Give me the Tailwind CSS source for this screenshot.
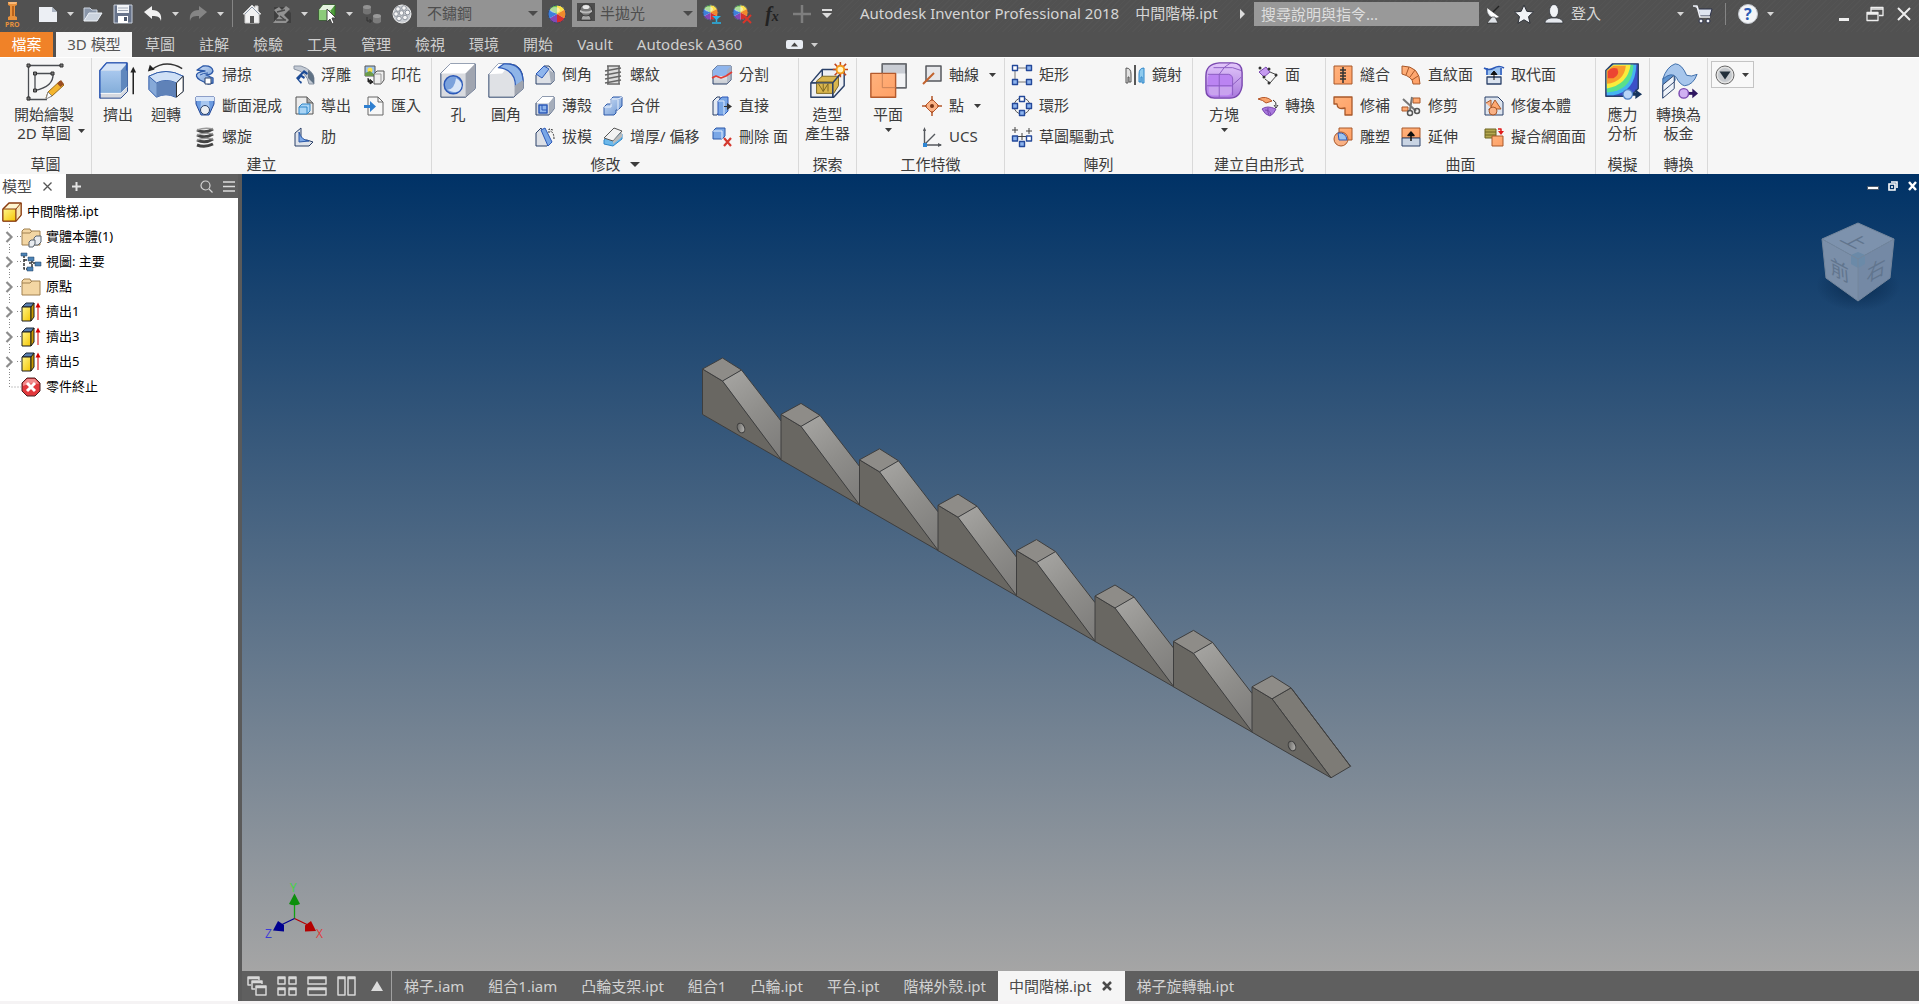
<!DOCTYPE html>
<html lang="zh-Hant">
<head>
<meta charset="utf-8">
<title>Autodesk Inventor Professional 2018 - 中間階梯.ipt</title>
<script src="https://cdn.jsdelivr.net/npm/@tailwindcss/browser@4"></script>
</head>
<body class="h-screen flex flex-col overflow-hidden bg-[#f5f5f5] font-['Noto_Sans','Noto_Sans_CJK_TC',sans-serif] text-[15px] leading-[19px] text-[#3c3c3c]">

<svg class="absolute size-0" aria-hidden="true">
  <defs>
    <linearGradient id="gBlue" x1="0" y1="0" x2="1" y2="1"><stop offset="0" stop-color="#cfe0f7"/><stop offset="1" stop-color="#6d97d3"/></linearGradient>
    <linearGradient id="gBox" x1="0" y1="0" x2="0" y2="1"><stop offset="0" stop-color="#a9c8ee"/><stop offset="1" stop-color="#83add9"/></linearGradient>
    <linearGradient id="gGrey" x1="0" y1="0" x2="0" y2="1"><stop offset="0" stop-color="#ffffff"/><stop offset="1" stop-color="#c8ccd3"/></linearGradient>
    <linearGradient id="gOrange" x1="0" y1="0" x2="1" y2="1"><stop offset="0" stop-color="#ffb27c"/><stop offset="1" stop-color="#ffa066"/></linearGradient>
    <linearGradient id="gPurple" x1="0" y1="0" x2="0" y2="1"><stop offset="0" stop-color="#e3c8fb"/><stop offset="1" stop-color="#a878dc"/></linearGradient>
    <linearGradient id="gYellow" x1="0" y1="0" x2="1" y2="1"><stop offset="0" stop-color="#fff68a"/><stop offset="1" stop-color="#f5c400"/></linearGradient>
    <linearGradient id="gHole" x1="0" y1="0" x2="1" y2="1"><stop offset="0" stop-color="#5c5b58"/><stop offset="1" stop-color="#c4c3c0"/></linearGradient>
    <linearGradient id="gSlope" gradientUnits="userSpaceOnUse" x1="25" y1="10" x2="78" y2="80"><stop offset="0" stop-color="#a3a29f"/><stop offset=".5" stop-color="#8f8e8b"/><stop offset="1" stop-color="#7f7e7c"/></linearGradient>
    <radialGradient id="gShade"><stop offset="0" stop-color="#001c3c" stop-opacity=".6"/><stop offset="1" stop-color="#001c3c" stop-opacity="0"/></radialGradient>
    <symbol id="down" viewBox="0 0 7 4"><path d="M0 0H7L3.5 4Z" fill="currentColor"/></symbol>
    <symbol id="ball" viewBox="0 0 20 20"><circle cx="10" cy="10" r="9" fill="#f4f4f4"/><path d="M10 10V1a9 9 0 0 1 7.800 4.500Z" fill="#fbe14a"/><path d="M10 10 17.800 5.500a9 9 0 0 1 0 9Z" fill="#f08a2c"/><path d="M10 10 17.800 14.500A9 9 0 0 1 10 19Z" fill="#d62f2f"/><path d="M10 10V19a9 9 0 0 1-7.800-4.500Z" fill="#8448b8"/><path d="M10 10 2.200 14.500a9 9 0 0 1 0-9Z" fill="#3d7fdc"/><path d="M10 10 2.200 5.500A9 9 0 0 1 10 1Z" fill="#6cc24a"/><circle cx="10" cy="10" r="9" fill="none" stroke="#3b4660"/><ellipse cx="8" cy="6" rx="5" ry="3" fill="#fff" opacity=".45"/></symbol>
    <symbol id="extrude" viewBox="0 0 20 20"><path d="M1 5 5 1h8l-2 4Z" fill="#5a7fae" stroke="#1d2a3a"/><path d="M1 5h9v14H1Z" fill="url(#gYellow)" stroke="#1d1d1d"/><path d="M10 5l3-4v14L10 19Z" fill="#c99a00" stroke="#1d1d1d"/><path d="M17 18V3" stroke="#d40000"/><path d="M14.500 5.500 17 .5l2.500 5Z" fill="#d40000"/></symbol>
  </defs>
</svg>

<header class="shrink-0 bg-[#515151] text-[#d6d6d6]">
  <div class="flex h-8 items-start bg-[repeating-linear-gradient(135deg,#515151_0px,#515151_3px,#545454_3px,#545454_4px)]">
    <div class="flex h-[27px] shrink-0 items-center bg-[#515151]" id="quick"></div>
    <h1 class="flex h-[27px] min-w-0 flex-1 items-center gap-4 overflow-hidden pl-[23px] whitespace-nowrap text-[15px]"><span>Autodesk Inventor Professional 2018</span><span>中間階梯.ipt</span></h1>
    <div class="flex h-[27px] shrink-0 items-center" id="account"></div>
  </div>
  <nav class="flex h-[25px] items-center text-[#cfcfcf]" id="tabs"></nav>
</header>

<section class="flex h-[117px] shrink-0 overflow-hidden border-t border-[#fff] bg-[#f6f6f6]" id="ribbon" aria-label="功能區"></section>

<main class="flex min-h-0 flex-1">
  <aside class="flex w-[238px] shrink-0 flex-col bg-white">
    <div class="flex h-6 shrink-0 items-center bg-[#5f5f5f] text-[#dcdcdc]">
      <button class="flex h-full w-[66px] items-center gap-[11px] bg-white pl-[2px] text-[#4a4a4a]">模型
        <svg class="size-[9px]" viewBox="0 0 9 9"><path d="M.5.5l8 8M8.500.5l-8 8" stroke="#555" stroke-width="1.300"/></svg></button>
      <button class="flex h-full w-5 items-center justify-center" aria-label="新增"><svg class="size-[9px]" viewBox="0 0 9 9"><path d="M4.500 0v9M0 4.500h9" stroke="#e4e4e4" stroke-width="2"/></svg></button>
      <button class="ml-auto flex h-full w-7 items-center justify-center" aria-label="搜尋"><svg class="size-[13px]" viewBox="0 0 13 13"><circle cx="5.500" cy="5.500" r="4.500" fill="none" stroke="#d4d4d4" stroke-width="1.200"/><path d="M9 9l3.500 3.500" stroke="#d4d4d4" stroke-width="1.300"/></svg></button>
      <button class="flex h-full w-[18px] items-center justify-center" aria-label="功能表"><svg class="h-[11px] w-3" viewBox="0 0 12 11"><path d="M0 1h12M0 5.500h12M0 10h12" stroke="#dcdcdc" stroke-width="1.300"/></svg></button>
    </div>
    <ul class="pt-px text-[13px] text-black" id="tree"></ul>
  </aside>
  <div class="w-1 shrink-0 bg-[#5a5a5a]"></div>
  <div class="flex min-w-0 flex-1 flex-col">
    <div class="relative min-h-0 flex-1 overflow-hidden bg-[linear-gradient(to_bottom,#003266,#a5a5a5)]">
      <svg class="absolute inset-0 size-full" viewBox="242 174 1677 797" id="scene">
        <g id="ladder"></g>
        <g stroke="#3d3d3d" stroke-width="1"><ellipse cx="741" cy="428" rx="3.500" ry="5" transform="rotate(-25 741 428)" fill="url(#gHole)"/><ellipse cx="1292" cy="746" rx="3.500" ry="5" transform="rotate(-25 1292 746)" fill="url(#gHole)"/></g>
        <g>
          <path d="M294.500 918.500V900" stroke="#12a012" stroke-width="1.300"/><path d="M289 904l5.500-10.500L300 904q-5.500 2.500-11 0Z" fill="#0c8f0c"/>
          <path d="M294.500 918.500 308 925" stroke="#b40000" stroke-width="1.200"/><path d="M305 931.500v-6l6-4.500 5 10Z" fill="#b40000"/>
          <path d="M294.500 918.500 281 925" stroke="#000090" stroke-width="1.200"/><path d="M273 930.500l5-9.500 6 4v6.500Z" fill="#000090"/>
          <text x="290" y="892" font-size="12" font-family="Open Sans" fill="#3fd63f">Y</text><text x="316" y="938" font-size="12" font-family="Open Sans" fill="#e03a3a">X</text><text x="265" y="938" font-size="12" font-family="Open Sans" fill="#3a3ad6">Z</text>
        </g>
      </svg>
      <svg class="absolute top-[42px] right-[16px] h-[96px] w-[90px]" viewBox="1813 216 90 96" aria-label="ViewCube">
        <ellipse cx="1858" cy="286" rx="42" ry="25" fill="url(#gShade)"/>
        <path d="M1858 223l36 16-36 20-36-20Z" fill="#7d92ad"/><path d="M1822 239l36 20v42l-32-23Z" fill="#7b8fa9"/><path d="M1894 239l-36 20v42l32-23Z" fill="#7489a5"/>
        <path d="M1851 255l7-3 7 3v9l-7 4-7-4Z" fill="#6b8aa8"/>
        <path d="M1858 223l36 16-4 39-32 23-32-23-4-39ZM1822 239l36 20 36-20M1858 259v42" fill="none" stroke="#74869c"/>
        <g font-family="Noto Sans CJK TC" font-size="21" fill="#61758e"><text transform="matrix(.87 .44 -.87 .46 1839 240)">上</text><text transform="matrix(.9 .48 .08 1 1831 273)">前</text><text transform="matrix(.9 -.48 -.08 1 1866 283)">右</text></g>
      </svg>
      <div class="absolute top-[7px] right-px flex h-[10px] items-center gap-[9px] text-white">
        <button aria-label="最小化"><svg class="h-[10px] w-3" viewBox="0 0 12 10"><path d="M0 5h12v4H0Z" fill="#4a5a6c"/><path d="M1 6h10v2H1Z" fill="#fff"/></svg></button>
        <button aria-label="還原"><svg class="size-[10px]" viewBox="0 0 10 10"><path d="M3 1h6v6M1 3h6v6H1ZM4 5v2" fill="none" stroke="#fff" stroke-width="1.600"/></svg></button>
        <button aria-label="關閉"><svg class="h-[10px] w-[11px]" viewBox="0 0 11 10"><path d="M2 1l7 8M9 1l-7 8" stroke="#fff" stroke-width="2.400"/></svg></button>
      </div>
    </div>
    <footer class="flex h-[30px] shrink-0 items-center bg-[#5f5f5f] text-[#d2d2d2]" id="docs"></footer>
  </div>
</main>
<div class="h-[3px] shrink-0 bg-[#f5f3f4]"></div>

<script>
const svg20 = (s, c = 'size-5 shrink-0 overflow-visible') => `<svg class="${c}" viewBox="0 0 20 20" fill="none" stroke-linejoin="round">${s}</svg>`;
const down = '<svg class="h-1 w-[7px] shrink-0"><use href="#down"/></svg>';
const N = 'stroke="#2a4068"', O = 'stroke="#a8582a"';

/* quick access bar */
const slot = (s, label, w) => `<button class="flex h-full ${w || 'w-[30px]'} shrink-0 items-center justify-center" aria-label="${label}">${svg20(s)}</button>`;
const dd = '<button class="flex h-full w-[15px] shrink-0 items-center justify-center" aria-label="更多">' + down + '</button>';
const caret = '<svg class="pointer-events-none absolute top-[11px] right-[4px] h-[5px] w-[10px]" viewBox="0 0 10 5"><path d="M0 0h10L5 5Z" fill="#4a4a4a"/></svg>';
document.getElementById('quick').innerHTML =
  `<button class="flex h-full w-[33px] shrink-0 items-start pl-[5px]" aria-label="Inventor"><svg class="h-7 w-[15px] overflow-visible" viewBox="0 0 15 28"><path d="M3 2h9v3l-2 1v10l2 1v3H3v-3l2-1V6L3 5Z" fill="#e8913c"/><path d="M7 6h2v10H7Z" fill="#b8621c"/><path d="M3 2h9l-1 2H4Z" fill="#f7b878"/><text x="0" y="27" font-size="7" font-weight="700" font-family="Open Sans" fill="#e8913c">PRO</text></svg></button>`
+ slot('<path d="M1 3h13l5 5v10H1Z" fill="#eceff4"/><path d="M14 3v5h5Z" fill="#aab3c2"/>', '新建') + dd
+ slot('<path d="M1 17V4h6l2 2h5v3" fill="#8995a8" stroke="#cdd5e0"/><path d="M1 17 6 9h13l-5 8Z" fill="#cbd3de" stroke="#eef2f7"/>', '開啟')
+ slot('<path d="M1 1h18v18H1Z" fill="#67738a" stroke="#c7cfdb"/><path d="M4 1h12v8H4Z" fill="#f2f4f7"/><path d="M5 12h10v7H5Z" fill="#fff"/><path d="M11 13h3v4h-3Z" fill="#4d586c"/><path d="M5 4h10M5 6.500h10" stroke="#a3abb8"/>', '儲存')
+ slot('<path d="M1 8 9 2v4c7 0 10 4 9 11-1-4-3-5-9-5v3Z" fill="#f2f2f2"/>', '退回') + dd
+ slot('<path d="M19 8 11 2v4C4 6 1 10 2 17c1-4 3-5 9-5v3Z" fill="#858585"/>', '重做') + dd
+ '<span class="mx-1 h-[27px] w-px shrink-0 bg-[#858585]"></span>'
+ slot('<path d="M10 1 1 10h2v9h14v-9h2l-3-3V2h-3v2Z" fill="#f1f1f1" stroke="#d0d0d0"/><path d="M8 12h4v7H8Z" fill="#555"/><path d="M3 10l7-7 7 7" stroke="#8a97a8"/>', '首頁')
+ slot('<path d="M2 3h11l6 6v10H2Z" fill="#3f3f3f"/><path d="M2 6l5-3 3 3 4-4 4 3-6 6 5 5-3 3H1l6-7Z" fill="#929292"/><path d="M5 8 13 6M4 16h10M8 12l5 4" stroke="#4a4a4a" stroke-width="1.500"/>', '塗彩') + dd
+ slot('<path d="M2 6 6 1h12v10l-4 5H2Z" fill="#4f9d3c" stroke="#2f6f23"/><path d="M2 6h12v10H2Z" fill="#8ccb79"/><path d="M6 1h12l-4 5H2Z" fill="#e4f3de"/><path d="M10 5v13l3-3 2 5 2-1-2-5h4Z" fill="#fff" stroke="#444"/>', '選取') + dd
+ slot('<path d="M1 3v6q4 3 8 0V3" fill="#747474"/><ellipse cx="5" cy="3" rx="4" ry="2" fill="#929292"/><path d="M11 12v6q4 3 8 0v-6" fill="#7b7b7b"/><ellipse cx="15" cy="12" rx="4" ry="2" fill="#999"/><path d="M5 13v4h4M7.500 15l2 2-2 2" stroke="#333"/>', '更新')
+ slot('<circle cx="10" cy="10" r="9" fill="#c9cdd2" stroke="#eee"/><g fill="#f6f6f6" stroke="#7b828b" stroke-width=".8"><circle cx="6" cy="5" r="2.300"/><circle cx="12" cy="4" r="2.300"/><circle cx="4" cy="10" r="2.300"/><circle cx="9.500" cy="9" r="2.300"/><circle cx="15.500" cy="8.500" r="2.300"/><circle cx="7" cy="14.500" r="2.300"/><circle cx="13" cy="13.500" r="2.300"/></g>', '材質')
+ `<label class="relative block h-[27px] w-[125px] shrink-0 text-[#4e4e4e]"><span class="sr-only">材料</span><select class="block h-[27px] w-full appearance-none bg-[#939393] pl-[10px] text-[15px] leading-[27px]"><option>不鏽鋼</option></select>${caret}</label>`
+ slot('<use href="#ball"/>', '外觀')
+ `<label class="relative block h-[27px] w-[125px] shrink-0 text-[#4e4e4e]"><span class="sr-only">外觀樣式</span><select class="block h-[27px] w-full appearance-none bg-[#939393] pl-[28px] text-[15px] leading-[27px]"><option>半拋光</option></select><svg class="pointer-events-none absolute top-[3px] left-[5px] size-[18px]" viewBox="0 0 18 18"><path d="M0 0h18v18H0Z" fill="#4d4d4d"/><path d="M4 17q0-4 3-5h4q3 1 3 5Z" fill="#a6a6a6" stroke="#222" stroke-width=".6"/><circle cx="9" cy="7" r="6" fill="#777" stroke="#222" stroke-width=".6"/><path d="M3 7q6 3 12 0v2q-6 3-12 0Z" fill="#bbb"/><ellipse cx="9" cy="4" rx="3.500" ry="2" fill="#e8e8e8"/></svg>${caret}</label>`
+ slot('<svg width="17" height="17" viewBox="0 0 20 20"><use href="#ball"/></svg><path d="M10 12h9l-4.500 4Z" fill="#29b5ea"/><path d="M14.500 14v4M10 19h9" stroke="#29b5ea" stroke-width="1.500"/>', '調整')
+ slot('<svg width="17" height="17" viewBox="0 0 20 20"><use href="#ball"/></svg><path d="M11 11l8 8M19 11l-8 8" stroke="#d8352a" stroke-width="2"/>', '清除')
+ `<button class="flex h-full w-[30px] shrink-0 items-center justify-center font-['Liberation_Serif',serif] text-xl leading-5 font-bold text-[#222] italic" aria-label="參數">f<sub class="text-sm leading-none">x</sub></button>`
+ slot('<path d="M10 1v18M1 10h18" stroke="#7e7e7e" stroke-width="2.500"/>', '加入')
+ slot('<path d="M5 5h10v2H5ZM5 9h10l-5 5Z" fill="#dcdcdc"/>', '自訂', 'w-5');

document.getElementById('account').innerHTML =
  `<svg class="mr-[9px] h-[10px] w-[5px]" viewBox="0 0 5 10"><path d="M0 0 5 5 0 10Z" fill="#ddd"/></svg>
  <input class="h-6 w-[225px] bg-[#999] pl-[7px] text-[15px] placeholder:text-[#dedede] placeholder:opacity-100" type="search" aria-label="搜尋說明與指令" placeholder="搜尋說明與指令...">`
+ slot('<path d="M3 5q0 9 10 9Z" fill="#dfe3e8"/><path d="M3 4 15 13Q6 16 3 4Z" fill="#fff"/><path d="M9 8l6-6" stroke="#222" stroke-width="1.500"/><path d="M8 13h3l3 6H3Z" fill="#dfe3e8" stroke="#222" stroke-width=".6"/>', '通訊')
+ slot('<path d="M10 1l2.800 6.300 6.700.7-5 4.600 1.500 6.700L10 15.800 4 19.300l1.500-6.700-5-4.600 6.700-.7Z" fill="#f1f3f6" stroke="#2d3138"/>', '我的最愛')
+ slot('<ellipse cx="10" cy="7" rx="4.500" ry="6.500" fill="#f1f3f6" stroke="#2d3138" stroke-width=".7"/><path d="M1 19q0-4 6-5h6q6 1 6 5Z" fill="#e6e9ee" stroke="#2d3138" stroke-width=".7"/>', '使用者')
+ `<button class="w-[104px] pl-[2px] text-left">登入</button>` + dd
+ slot('<path d="M0 2h4l3 10h10l2-7H6" fill="#dfe5f0" stroke="#2b3048"/><path d="M0 2h4l3 11h10" stroke="#f1f3f8" stroke-width="1.600"/><circle cx="8" cy="17" r="2" fill="#f1f3f8" stroke="#2b3048"/><circle cx="15" cy="17" r="2" fill="#f1f3f8" stroke="#2b3048"/>', '購物')
+ '<span class="mx-[7px] h-[22px] w-px shrink-0 bg-[#858585]"></span>'
+ slot('<circle cx="10" cy="10" r="9.500" fill="#f3f5f8" stroke="#c4c8ce"/><text x="6" y="16" font-size="16" font-weight="700" font-family="Open Sans" fill="#2b5bb5">?</text>', '說明') + dd
+ `<span class="w-[51px]"></span>`
+ slot('<path d="M5 14h10v3H5Z" fill="#eee"/>', '最小化')
+ slot('<path d="M7 8V3.500h12v8h-4" stroke="#eee" stroke-width="1.300"/><path d="M3 8.500h11v8H3ZM7 5h12M3 10h11" stroke="#eee" stroke-width="1.300"/>', '還原')
+ slot('<path d="M4 4l12 12M16 4 4 16" stroke="#eee" stroke-width="2"/>', '關閉');

/* ribbon tabs */
document.getElementById('tabs').innerHTML =
  '<button class="mr-[3px] h-full w-[53px] bg-[#f08228] text-white">檔案</button><button class="mr-px h-full w-[76px] bg-[#f6f6f6] text-[#555]">3D 模型</button>'
+ ['草圖','註解','檢驗','工具','管理','檢視','環境','開始','Vault','Autodesk A360'].map(t => `<button class="h-full px-3">${t}</button>`).join('')
+ '<button class="ml-8 flex h-full items-center gap-2" aria-label="最小化功能區"><svg class="h-[9px] w-[17px]" viewBox="0 0 17 9"><rect width="17" height="9" rx="2" fill="#e8ecf2"/><path d="M5 6.500h7L8.500 2.500Z" fill="#444"/></svg>' + down + '</button>';

/* ribbon panels */
const big = (icon, lines, w, arrow) => `<button class="flex ${w} shrink-0 flex-col items-center pt-[2px]"><svg class="mb-1 size-10 shrink-0" viewBox="-1 -1 42 42" fill="none" stroke-linejoin="round">${icon}</svg>${lines.map(l => `<span class="whitespace-nowrap">${l}</span>`).join('')}${arrow ? '<span class="pt-1">' + down + '</span>' : ''}</button>`;
const col = (w, rows) => `<div class="flex ${w} shrink-0 flex-col">${rows.map(([i, t, a]) => `<button class="flex h-[31px] items-center gap-[7px] pl-[5px] whitespace-nowrap">${svg20(i)}<span>${t}</span>${a ? '<span class="pl-[3px]">' + down + '</span>' : ''}</button>`).join('')}</div>`;
const panel = (w, pad, name, body, arrow) => `<div class="flex ${w} shrink-0 flex-col border-r border-[#d9d9d9] pt-px"><div class="flex h-[93px] ${pad}">${body}</div><div class="flex h-[22px] items-center justify-center gap-[9px] pt-[2px]">${name}${arrow ? '<svg class="h-[5px] w-[10px]" viewBox="0 0 10 5"><path d="M0 0h10L5 5Z" fill="#3c3c3c"/></svg>' : ''}</div></div>`;
const sq = (x, y, f) => `<path d="M${x} ${y}h5v5h-5Z" fill="${f || '#8db4ee'}" stroke="#24499a" stroke-width="1.400"/>`;
const box = '<path d="M1 7 7 1h12v12l-5 6H1Z" fill="#d5d9e0" stroke="#2a4068"/><path d="M1 7 7 1h12l-5 6Z" fill="#fff"/><path d="M14 7l5-6v12l-5 6Z" fill="#a5adba"/>';

document.getElementById('ribbon').innerHTML =
panel('w-[92px]', 'pl-[14px]', '草圖', `<button class="flex shrink-0 items-end gap-1 self-start"><span class="flex w-[60px] flex-col items-center pt-[2px]"><svg class="mb-1 size-10" viewBox="0 0 40 40" fill="none"><g stroke="#4a4d52" stroke-width="1.300"><path d="M3 4.500h35M4.500 4v34M3 38.500h20M11 12v18M11 12.500h18q1 13-18 17"/></g><g fill="#777" stroke="#333"><path d="M3 3h3v3H3ZM36 3h3v3h-3ZM3 36h3v3H3ZM9.500 11h3v3h-3ZM27 11h3v3h-3ZM9.500 28h3v3h-3Z"/></g><path d="M22 37l2-6 12-11 4 4-12 11Z" fill="#f3b52e" stroke="#9a6a1c"/><path d="M33 22.500l4-3.500 3 4-3.500 3Z" fill="#9a4e22"/><path d="M22 38l2-7 4 4Z" fill="#fff" stroke="#888"/></svg><span class="whitespace-nowrap">開始繪製</span><span class="whitespace-nowrap">2D 草圖</span></span><span class="pb-[10px]">${down}</span></button>`)
+ panel('w-[340px]', 'pl-[2px]', '建立',
  big('<path d="M1 9 8 1h22v30l-7 7H1Z" fill="#d6d9df" stroke="#23458a"/><path d="M1 9h22v24H1Z" fill="url(#gBox)"/><path d="M1 9 8 1h22l-7 8Z" fill="#d4e3f7"/><path d="M23 9l7-8v25l-7 7Z" fill="#5f87bd"/><path d="M1 33h22l7-7" stroke="#fff"/><path d="M1 38V9L8 1h21v8" stroke="#2c59b8" stroke-width="1.400"/><path d="M36 34V9" stroke="#222" stroke-width="1.600"/><path d="M33 11l3-6 3 6Z" fill="#222"/>', ['擠出'], 'w-12')
+ big('<path d="M2 15Q20 5 38 15v16l-8 6q-10-5-20 0l-8-8Z" fill="#86a9d8" stroke="#2c59a8"/><path d="M2 15Q20 5 38 15l-7 7q-11-5-21 0Z" fill="#cfe0f6" stroke="#2c59a8"/><path d="M10 22q10-5 21 0v15q-10-5-21 0Z" fill="#5f82b8"/><path d="M31 22l7-7v16l-7 6Z" fill="#fff" stroke="#222"/><path d="M5 8Q20-3 37 7" stroke="#333" stroke-width="1.500"/><path d="M1 10l2-7 5 5Z" fill="#222"/>', ['迴轉'], 'w-12')
+ col('w-[99px]', [
 ['<path d="M2 5 8 1q9-1 10 5-1 4-7 4l7 3v5l-5 1-8-4Q-1 11 3 8q4-2 7-2Z" fill="url(#gBlue)" stroke="#2c59a8" stroke-width="1.300"/><path d="M10 13h6v6h-6Z" fill="#fff" stroke="#2a4068"/><path d="M5 10q3-2 8-2" stroke="#2c59a8"/>','掃掠'],
 ['<path d="M1 1h18v7l-5 11H6L1 8Z" fill="#6b9be0" stroke="#24499a"/><path d="M1 1h18v4H1Z" fill="#d8e6f9"/><path d="M6 5h8l1 10H5Z" fill="#a8c7f0"/><circle cx="10" cy="14" r="4.500" fill="#eceff3" stroke="#2a4068"/>','斷面混成'],
 ['<path d="M2 3q8 4 16-1M2 8q8 4 16-1M2 13q8 4 16-1M2 18q8 3 16-1" stroke="#444" stroke-width="3"/><path d="M2 3q8-3 16-1M2 8q8-3 16-1M2 13q8-3 16-1" stroke="#9a9a9a" stroke-width="1.500"/>','螺旋']])
+ col('w-[70px]', [
 ['<path d="M0 1h7q12 4 13 12v6h-5Q13 7 0 4Z" fill="#c3cad4" stroke="#8a94a3"/><path d="M14 5q6 4 6 8v6l-6-6Z" fill="#5f7184"/><path d="M2 13l8-8 4 3-1 2-3-2-2 2 3 2-1 2-3-2-2 3 3 2-1 2Z" fill="#1c4b96"/>','浮雕'],
 ['<path d="M2 1h11l6 6v11H2Z" fill="#ececec" stroke="#555"/><path d="M13 1v6h6" fill="#aaa" stroke="#555"/><path d="M5 11l3-3h8v7l-3 3H5Z" fill="#a9d4f5" stroke="#2e86c9"/><path d="M5 11h8v7" stroke="#2e86c9"/>','導出'],
 ['<path d="M1 6 7 1v12h6l6 2-4 4H1Z" fill="#dfe3ea" stroke="#2a4068"/><path d="M5 5q2 8 10 9l-10 1Z" fill="#7aa7e6" stroke="#2c59a8"/>','肋']])
+ col('w-[72px]', [
 ['<path d="M1 1h10v10H1Z" fill="#9cc3ea" stroke="#555"/><circle cx="6" cy="5" r="2.500" fill="#fbe14a"/><path d="M1 8l5-2 5 4v1H1Z" fill="#6b9a4a"/><path d="M10 9l3-3h7v9l-3 4h-7Z" fill="#eee" stroke="#555"/><path d="M10 9h7v10" stroke="#999"/><path d="M4 13v4h3M6 14.500l3 2.500-3 2Z" stroke="#222" fill="#222"/>','印花'],
 ['<path d="M4 1h10l5 5v13H4Z" fill="#f7f7f7" stroke="#666"/><path d="M14 1v5h5" stroke="#666"/><path d="M0 9h6V5l6 5.500L6 16v-4H0Z" fill="#2e7fd0"/>','匯入']]))
+ panel('w-[367px]', 'pl-[2px]', '修改',
  big('<path d="M2 12 12 2h26v26L28 37H2Z" fill="#d9dbe0" stroke="#2a4068"/><path d="M2 12 12 2h26L28 12Z" fill="#fff"/><path d="M28 12 38 2v26l-10 9Z" fill="#a0a5b0"/><circle cx="15" cy="24" r="9.500" fill="#7ba2dc" stroke="#2c59b8" stroke-width="1.600"/><path d="M8 29q8 1 10-12 8 4 5 11t-15 1Z" fill="#d9e6f8"/>', ['孔'], 'w-12')
+ big('<path d="M2 13 12 2h12q14 1 14 18v8l-10 9H2Z" fill="#dfe1e5" stroke="#2a4068"/><path d="M2 13 12 2h12L16 12Z" fill="#fff"/><path d="M12 6 18 2q19-1 20 18l-8 6Q30 8 12 6Z" fill="#8fb5e8" stroke="#2c59b8" stroke-width="1.300"/><path d="M29 25l9-6v9l-9 8Z" fill="#a0a5b0"/>', ['圓角'], 'w-12')
+ col('w-[68px]', [
 ['<path d="M1 10 9 1h5l5 6v9l-3 3H1Z" fill="#dde0e6" stroke="#2a4068"/><path d="M1 9 9 1l5 3-7 9Z" fill="#8fb5ec" stroke="#2c59b8"/><path d="M14 5l5 3v8l-3 3Z" fill="#a5adba"/>','倒角'],
 [box + '<path d="M4 9h8v8H4Z" fill="#8fb5ec" stroke="#2c59b8" stroke-width="1.500"/><path d="M7 9v5h5" stroke="#2c59b8"/>','薄殼'],
 ['<path d="M1 6 6 1l8 16-2 2H1Z" fill="#dde0e6" stroke="#2a4068"/><path d="M6 3l4-2 7 14-4 4Z" fill="#7aa7e6" stroke="#2c59b8"/><path d="M19 12q0-7-4-8M14 6V2l4 1" stroke="#333" stroke-dasharray="2 1"/>','拔模']])
+ col('w-[109px]', [
 ['<path d="M4 1h13M4 19h13M5 1v18M16 1v18" stroke="#666" stroke-width="1.500"/><path d="M6 2h9v16H6Z" fill="#ddd"/><path d="M2 6l16-3M2 10l16-3M2 14l16-3M2 18l16-3" stroke="#666" stroke-width="1.500"/>','螺紋'],
 ['<path d="M8 3 10 1h9v9l-4 4h-2v3l-2 2H1v-8l3-3h4Z" fill="url(#gBlue)" stroke="#2c59a8"/><path d="M8 3h7l4-2M15 4v10M1 11h7V4" stroke="#e9f1fc"/>','合併'],
 ['<path d="M1 13 11 4l8 3v5l-9 7-9-2Z" fill="#6cb8ea" stroke="#2e86c9"/><path d="M1 11 11 1l8 3-9 10Z" fill="#f2f2f2" stroke="#555"/><path d="M10 14l9-9v5l-9 7Z" fill="#bbb"/>','增厚/ 偏移']])
+ col('w-[90px]', [
 ['<path d="M1 5 5 1h14v14l-4 4H1Z" fill="url(#gGrey)" stroke="#2a4068"/><path d="M1 5 5 1h14v7l-4 3H1Z" fill="#8fb5ec"/><path d="M15 5l4-4v14l-4 4Z" fill="#a5adba" opacity=".7"/><path d="M0 13l4-2 5 2 5-2 6-4" stroke="#e33c34" stroke-width="1.700"/>','分割'],
 ['<path d="M1 5 5 1h3v14l-3 4H1Z" fill="#e4eaf3" stroke="#2a4068"/><path d="M6 5l4-4h6v14l-4 4H6Z" fill="#7aa7e6" stroke="#2c59b8"/><path d="M6 5h6v14" stroke="#dce9fb"/><path d="M12 10h3V7l5 3.500-5 3.500v-3h-3Z" fill="#333"/>','直接'],
 ['<path d="M1 4 4 1h9v8l-3 3H1Z" fill="#7aa7e6" stroke="#2c59a8"/><path d="M1 4h9v8" stroke="#e4effd"/><path d="M12 11l7 8M19 11l-7 8" stroke="#d43a30" stroke-width="2.200"/>','刪除 面']]), true)
+ panel('w-[58px]', 'justify-center', '探索', big('<path d="M2 22 14 8h23v17L26 37H2ZM2 22h23V37M25 22 37 8M14 8v14" fill="#eef0f4" stroke="#2a4068" stroke-width="1.500"/><path d="M8 20l6-5h17v10l-5 8H8Z" fill="#d9b64e" stroke="#7a6420"/><path d="M8 21h17l6-6M25 21v12M10 23l5 8M15 23v8l5-8v8" stroke="#7a6420"/><path d="M2 22h23V37M25 22 37 8" stroke="#2a4068" stroke-width="1.500"/><path d="M25 8h16M33 0v16M27 2l12 12M39 2 27 14" stroke="#c2481e" stroke-width="1.600"/><circle cx="33" cy="8" r="4" fill="#fff6c0" stroke="#f59a1c" stroke-width="2"/>', ['造型','產生器'], 'w-[50px]'))
+ panel('w-[148px]', 'pl-[2px]', '工作特徵', big('<path d="M14 2h25v25H14Z" fill="#c9cdd4" stroke="#66696e" stroke-width="1.500"/><path d="M28 12h11v15H22Z" fill="#f2f3f5"/><path d="M14 2h25v25H14Z" stroke="#66696e" stroke-width="1.500"/><path d="M2 12h26v25H2Z" fill="url(#gOrange)" stroke="#b45a2c" stroke-width="1.500"/><path d="M14 12v15h14" stroke="#c78055"/>', ['平面'], 'w-[58px]', true)
+ col('w-[88px]', [
 ['<path d="M4 1h15v15H4Z" fill="#e6e7ea" stroke="#55585d" stroke-width="1.500"/><path d="M1 19 12 8" stroke="#c2622e" stroke-width="2"/>','軸線',1],
 ['<path d="M10 3l7 7-7 7-7-7Z" fill="#f9b185" stroke="#b4572a"/><path d="M10 0v5M10 15v5M0 10h5M15 10h5" stroke="#b4572a" stroke-width="1.500"/><circle cx="10" cy="10" r="2" fill="#7a3414"/>','點',1],
 ['<path d="M2.500 18V2M2 18h17M3 17 13 7" stroke="#55585d" stroke-width="1.400"/><path d="M1 4l1.500-4L4 4ZM16 16l4 2-4 2Z" fill="#55585d"/><path d="M1 16h4v4H1Z" fill="#2e86d4"/>','UCS']]))
+ panel('w-[188px]', 'pl-[2px]', '陣列', col('w-[113px]', [
 ['<path d="M3 3h14M3 17h14M3 3v14" stroke="#777"/>' + sq(.5,.5,'#fff') + sq(14.5,.5) + sq(.5,14.5) + sq(14.5,14.5),'矩形'],
 ['<circle cx="10" cy="10" r="8" stroke="#555"/>' + sq(7.5,.5,'#fff') + sq(.5,7.500) + sq(14.5,7.500) + sq(7.5,14.5) ,'環形'],
 ['<path d="M3 0v6M0 3h6M17 1v6M14 4h6M10 6v7M6 9.500h8" stroke="#444"/>' + sq(.5,9) + sq(14.5,9,'#fff') + sq(7.5,14.5),'草圖驅動式']])
+ col('w-[70px]', [['<path d="M1 3q5 0 5 6v8H4v-5H3v6H1Z" fill="#e1e1e1" stroke="#555"/><path d="M19 3q-5 0-5 6v8h2v-5h1v6h2Z" fill="#8fcbee" stroke="#2e86c9"/><path d="M10 0v20" stroke="#222" stroke-width="1.500"/>','鏡射']]))
+ panel('w-[133px]', 'pl-[2px]', '建立自由形式', big('<path d="M1 15Q1 2 15 1h14q10 0 10 10v14Q37 38 26 38H10Q1 38 1 29Z" fill="url(#gPurple)" stroke="#7a48b0" stroke-width="1.500"/><path d="M3 17q0-4 5-4h16q5 0 5 5v14q-1 4-5 4H8q-5 0-5-5Z" fill="#bb84f2"/><path d="M4 26h24v5q-1 4-5 4H8q-4 0-4-5Z" fill="#c9a3ee"/><path d="M2 25h26l10-9M15 37V13Q20 4 27 1M3 13h22q5 1 4 8v14M9 6h20l9 3" stroke="#8a5cc0"/>', ['方塊'], 'w-[58px]', true)
+ col('w-[70px]', [
 ['<path d="M1 7 8 2l4 5-6 5Z" fill="#c59af0" stroke="#7a48b0"/><path d="M12 7l7 3-7 8-5-4" stroke="#444"/><g fill="#333"><circle cx="2" cy="3" r="1.500"/><circle cx="11" cy="4" r="1.500"/><circle cx="18" cy="10" r="1.500"/><circle cx="11" cy="18" r="1.500"/><circle cx="6" cy="12" r="1.500"/></g>','面'],
 ['<path d="M0 3q8-4 14 2l-6 2Q5 4 0 3Z" fill="#f9a36b" stroke="#b4572a"/><path d="M4 13q5-4 14 0-2 5-6 7-5-1-8-7Z" fill="#a878dc" stroke="#7a48b0"/><path d="M7 14q5 0 6 5M10 12q-1 4 1 7" stroke="#7a48b0"/><path d="M15 4q4 2 3 6M16 9l2 3 2-3" stroke="#333"/>','轉換']]))
+ panel('w-[270px]', 'pl-[2px]', '曲面', col('w-[68px]', [
 [`<path d="M1 1h18v18H1Z" fill="url(#gOrange)" ${O}/><path d="M10 2v16M7 5h6M7 8h6M7 11h6M7 14h6" stroke="#333" stroke-width="1.500"/>`,'縫合'],
 [`<path d="M1 1h18v18h-7v-7q-8 2-8-4H1Z" fill="url(#gOrange)" ${O} stroke-width="1.300"/>`,'修補'],
 [`<path d="M6 1h13v12H6Z" fill="url(#gOrange)" ${O}/><circle cx="8" cy="12" r="7" fill="#f9b185" ${O}/><path d="M5 6q8-1 9 7H6Z" fill="#9cc3f0" stroke="#2c59b8"/>`,'雕塑']])
+ col('w-[83px]', [
 [`<path d="M1 1q18 0 18 18h-7Q12 12 1 9Z" fill="url(#gOrange)" ${O}/><path d="M5 10 8 2M9 12l5-7M11 15l6-4" ${O}/>`,'直紋面'],
 [`<path d="M12 2h7v5h-7ZM1 11h6v4H1Z" fill="url(#gOrange)" ${O}/><path d="M2 3l13 12M11 1 9 14" stroke="#777" stroke-width="2"/><circle cx="16" cy="15" r="2.500" stroke="#555" stroke-width="1.500"/><circle cx="9" cy="17" r="2.500" stroke="#555" stroke-width="1.500"/>`,'修剪'],
 [`<path d="M1 1h18v10H1Z" fill="url(#gOrange)" ${O}/><path d="M1 11h18v8H1Z" fill="#c9d4e3" ${N}/><path d="M10 14V7M7 8.500 10 5l3 3.500Z" stroke="#111" stroke-width="1.500" fill="#111"/>`,'延伸']])
+ col('w-[110px]', [
 ['<path d="M2 3q4 2 8 0t8 0v7H2Z" fill="#9cc3f0"/><path d="M0 3q5 3 10 0t10 0M3 3v7M17 3v7" stroke="#2c59b8" stroke-width="1.500"/><path d="M3 12h14v7H3Z" fill="#dce4ef" stroke="#2a4068" stroke-width="1.300"/><path d="M10 15V8M7 9.500 10 6l3 3.500Z" stroke="#111" fill="#111"/>','取代面'],
 [`<path d="M1 1h13l5 5v13H1Z" fill="#dde4ee" ${N}/><path d="M5 14 11 4l6 9H5Z" fill="url(#gOrange)" ${O}/><circle cx="9" cy="15" r="4" fill="#f9b185" ${O}/><path d="M2 7l5-3v8" fill="#f9b185" ${O}/>`,'修復本體'],
 [`<path d="M1 2h11v9H1Z" fill="#b5a850" stroke="#6d6420"/><path d="M1 5h11M1 8h11" stroke="#6d6420"/><path d="M8 9h11v10H8Z" fill="url(#gOrange)" ${O}/><path d="M14 2h3v3" stroke="#e01c1c" stroke-width="1.500"/><path d="M14 4h6l-3 4Z" fill="#e01c1c"/>`,'擬合網面面']]))
+ panel('w-[54px]', 'justify-center', '模擬', big('<path d="M2 9 9 2h27v26l-8 8H2Z" fill="#3c50c8" stroke="#2a4068" stroke-width="1.500"/><path d="M3 9 10 3h24q-1 28-24 32H3Z" fill="#44b4f0"/><path d="M3 9 10 3h21Q30 27 10 31l-7 1Z" fill="#58e08c"/><path d="M3 9 10 3h18Q25 24 3 28Z" fill="#f8ec3c"/><path d="M3 9 10 4h13Q21 21 3 23Z" fill="#f89a2c"/><path d="M4 10q4-5 10-3 3 7-4 10H4Z" fill="#ec4432"/><path d="M26 34h9" stroke="#16345c" stroke-width="3"/><path d="M33 29l7 5-7 5Z" fill="#16345c"/><circle cx="25" cy="34" r="5" fill="#b9d5f7" stroke="#4b7fc4" stroke-width="1.300"/>', ['應力','分析'], 'w-[50px]'))
+ panel('w-[58px]', 'justify-center', '轉換', big('<path d="M3 18 14 4l2 15L3 38Z" fill="#5f93cf" stroke="#3a6aa8"/><path d="M3 24l12-10v14L3 38Z" fill="#eef3fa" stroke="#2a4068"/><path d="M3 31l12-10" stroke="#2a4068"/><path d="M3 18Q7 5 16 2q7 0 12 12 5 2 11-1-4 11-13 12-5-1-9-9-5-6-14 2Z" fill="#a7c6ec" stroke="#3a6aa8"/><path d="M28 33h8" stroke="#2e1760" stroke-width="3"/><path d="M34 28l6 5-6 5Z" fill="#2e1760"/><circle cx="25" cy="33" r="5" fill="#d0b1f2" stroke="#7a48b0" stroke-width="1.500"/>', ['轉換為','板金'], 'w-[50px]'))
+ `<button class="mt-[3px] ml-[3px] flex h-[27px] w-[43px] shrink-0 items-center gap-[7px] border border-[#c4c4c4] bg-[#f8f8f8] pl-[3px]" aria-label="顯示面板"><svg class="size-5" viewBox="0 0 20 20"><circle cx="10" cy="10" r="9" fill="#e2e2e2" stroke="#666"/><circle cx="10" cy="10" r="7" fill="#c4c8cc"/><path d="M4.500 6.500h11l-5.500 8Z" fill="#22303c"/></svg>${down}</button>`;

/* model browser */
const folder = '<path d="M1 18V4l2-2h6l1 2h9v14Z" fill="#f3d6a3" stroke="#a08050"/><path d="M1 6h8l2-2" stroke="#a08050"/>';
const nodes = [
 [folder + '<path d="M13 11l2-2h5v6l-3 3h-4Z" fill="#e8ebef" stroke="#59626e"/><path d="M8 15l2-2h4v4l-2 3H8Z" fill="#e8ebef" stroke="#59626e"/>', '實體本體(1)'],
 ['<path d="M3 3v14h3M3 8h4M11 8v7M8 11h9" stroke="#333" stroke-dasharray="3 1" stroke-width="1.500"/><path d="M0 1h6v3H0ZM7 5h6v4H7ZM6 15h6v4H6ZM14 10h6v4h-6Z" fill="#4c83b5" stroke="#1e3f60" stroke-width=".5"/>', '視圖: 主要'],
 [folder, '原點'], ['<use href="#extrude"/>', '擠出1'], ['<use href="#extrude"/>', '擠出3'], ['<use href="#extrude"/>', '擠出5'],
 ['<path d="M6 1h8l5 5v8l-5 5H6l-5-5V6Z" fill="#e2383c" stroke="#4a2022"/><path d="M6 2h8l4 5q-8-2-16 2V6Z" fill="#f28a8c"/><path d="M6 6l8 8M14 6l-8 8" stroke="#fff" stroke-width="3"/>', '零件終止']];
document.getElementById('tree').innerHTML =
 `<li class="flex h-[25px] items-center gap-[5px] pl-[2px]">${svg20('<path d="M1 7 7 1h12v12l-5 6H1Z" fill="#fff6d0" stroke="#8a3c10" stroke-width="1.500"/><path d="M1 7h13v12H1Z" fill="url(#gYellow)" stroke="#8a3c10"/><path d="M14 7l5-6v12l-5 6Z" fill="#f7e5b8" stroke="#8a3c10"/>')}<span>中間階梯.ipt</span></li>`
 + nodes.map(([i, t], k) => `<li class="flex h-[25px] items-center pl-[5px]"><svg class="h-[25px] w-4 shrink-0" viewBox="0 0 16 25" fill="none">${k < 6 ? '<path d="M4.500 0v6M4.500 20v5M12 12.500h4" stroke="#888" stroke-dasharray="1 2"/><path d="M1.500 8l5 5-5 5" stroke="#8c8c8c" stroke-width="2.200"/>' : '<path d="M4.500 0v13h12" stroke="#888" stroke-dasharray="1 2"/>'}</svg>${svg20(i)}<span class="pl-[5px]">${t}</span></li>`).join('');

/* open documents */
const win = (d, l) => `<button class="flex h-full w-[30px] items-center justify-center" aria-label="${l}">${svg20(`<path d="${d}" stroke="#d8d8d8" stroke-width="1.500"/>`)}</button>`;
document.getElementById('docs').innerHTML =
 win('M4 9H1V1h11v3M1 2.500h11M8 13H5V5h10v3M5 6.500h10M9 10h10v9H9ZM9 11.500h10','重疊') + win('M1 1h7v7H1ZM12 1h7v7h-7ZM1 12h7v7H1ZM12 12h7v7h-7ZM1 2.500h7M12 2.500h7M1 13.500h7M12 13.500h7','並排') + win('M1 1h18v7H1ZM1 2.500h18M1 12h18v7H1ZM1 13.500h18','水平') + win('M1 1h7v18H1ZM1 2.500h7M11 1h7v18h-7ZM11 2.500h7','垂直')
 + '<button class="flex h-full w-[30px] items-center justify-center border-r border-[#a0a0a0]" aria-label="清單"><svg class="h-[10px] w-3" viewBox="0 0 12 10"><path d="M6 0 12 10H0Z" fill="#dcdcdc"/></svg></button>'
 + ['梯子.iam','組合1.iam','凸輪支架.ipt','組合1','凸輪.ipt','平台.ipt','階梯外殼.ipt','*中間階梯.ipt','梯子旋轉軸.ipt'].map(t => t[0] === '*'
   ? `<button class="flex h-full items-center gap-[10px] bg-[#f5f5f5] pr-[13px] pl-[11px] whitespace-nowrap text-[#4a4a4a]">${t.slice(1)}<svg class="size-[10px]" viewBox="0 0 10 10"><path d="M1 1l8 8M9 1 1 9" stroke="#4a4a4a" stroke-width="2.500"/></svg></button>`
   : `<button class="h-full px-3 whitespace-nowrap">${t}</button>`).join('');

/* stair stringer: eight teeth along the isometric axis */
let g = '';
for (let i = 0; i < 8; i++) {
  const x = 702.5 + i * 78.5, y = 369 + i * 45.4, last = i === 7;
  g += `<g transform="translate(${x} ${y})" stroke="#3e3e3e" stroke-width="1" stroke-linejoin="round">`
    + `<path d="M39 1 ${last ? '98.500 79.500 79 91' : '78.500 52V91'}L20 12Z" fill="${last ? '#7d7b76' : 'url(#gSlope)'}" ${last ? '' : 'stroke="none"'}/>`
    + `<path d="M0 0V45.400L79 91 20 12Z" fill="#696762"/><path d="M0 0 20-11 39 1 20 12Z" fill="#8e8c88"/><path d="M39 1 ${last ? '98.500 79.500' : '78.500 52'}" fill="none"/></g>`;
}
document.getElementById('ladder').innerHTML = g;
</script>
</body>
</html>
